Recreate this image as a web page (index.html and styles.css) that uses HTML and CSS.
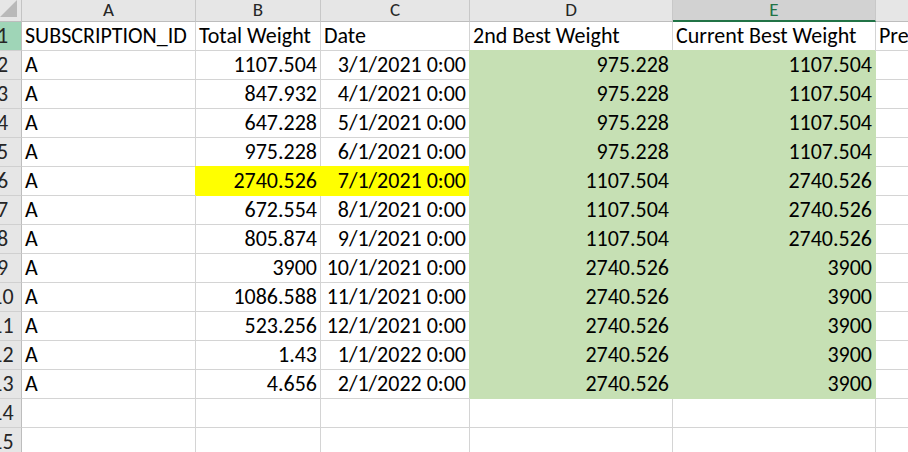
FILE: index.html
```html
<!DOCTYPE html>
<html lang="en">

<head>
    <title>Sheet1</title>
    <link rel="stylesheet" href="styles.css">
</head>

<body>
    <div class="sheet">
        <div class="corner">
            <svg width="17" height="17" viewBox="0 0 17 17"><polygon points="17,0 17,17 0,17" fill="#b9b9b9"/></svg>
        </div>
        <div class="col">A</div>
        <div class="col">B</div>
        <div class="col">C</div>
        <div class="col">D</div>
        <div class="col selcol">E</div>
        <div class="col">F</div>

        <div class="rn selrow">1</div>
        <div class="cell">SUBSCRIPTION_ID</div>
        <div class="cell">Total Weight</div>
        <div class="cell">Date</div>
        <div class="cell">2nd Best Weight</div>
        <div class="cell">Current Best Weight</div>
        <div class="cell">Previous Best Weight</div>

        <div class="rn">2</div>
        <div class="cell">A</div>
        <div class="cell num">1107.504</div>
        <div class="cell num">3/1/2021 0:00</div>
        <div class="cell num green">975.228</div>
        <div class="cell num green">1107.504</div>
        <div class="cell"></div>

        <div class="rn">3</div>
        <div class="cell">A</div>
        <div class="cell num">847.932</div>
        <div class="cell num">4/1/2021 0:00</div>
        <div class="cell num green">975.228</div>
        <div class="cell num green">1107.504</div>
        <div class="cell"></div>

        <div class="rn">4</div>
        <div class="cell">A</div>
        <div class="cell num">647.228</div>
        <div class="cell num">5/1/2021 0:00</div>
        <div class="cell num green">975.228</div>
        <div class="cell num green">1107.504</div>
        <div class="cell"></div>

        <div class="rn">5</div>
        <div class="cell">A</div>
        <div class="cell num">975.228</div>
        <div class="cell num">6/1/2021 0:00</div>
        <div class="cell num green">975.228</div>
        <div class="cell num green">1107.504</div>
        <div class="cell"></div>

        <div class="rn">6</div>
        <div class="cell">A</div>
        <div class="cell num yellow">2740.526</div>
        <div class="cell num yellow">7/1/2021 0:00</div>
        <div class="cell num green">1107.504</div>
        <div class="cell num green">2740.526</div>
        <div class="cell"></div>

        <div class="rn">7</div>
        <div class="cell">A</div>
        <div class="cell num">672.554</div>
        <div class="cell num">8/1/2021 0:00</div>
        <div class="cell num green">1107.504</div>
        <div class="cell num green">2740.526</div>
        <div class="cell"></div>

        <div class="rn">8</div>
        <div class="cell">A</div>
        <div class="cell num">805.874</div>
        <div class="cell num">9/1/2021 0:00</div>
        <div class="cell num green">1107.504</div>
        <div class="cell num green">2740.526</div>
        <div class="cell"></div>

        <div class="rn">9</div>
        <div class="cell">A</div>
        <div class="cell num">3900</div>
        <div class="cell num">10/1/2021 0:00</div>
        <div class="cell num green">2740.526</div>
        <div class="cell num green">3900</div>
        <div class="cell"></div>

        <div class="rn">10</div>
        <div class="cell">A</div>
        <div class="cell num">1086.588</div>
        <div class="cell num">11/1/2021 0:00</div>
        <div class="cell num green">2740.526</div>
        <div class="cell num green">3900</div>
        <div class="cell"></div>

        <div class="rn">11</div>
        <div class="cell">A</div>
        <div class="cell num">523.256</div>
        <div class="cell num">12/1/2021 0:00</div>
        <div class="cell num green">2740.526</div>
        <div class="cell num green">3900</div>
        <div class="cell"></div>

        <div class="rn">12</div>
        <div class="cell">A</div>
        <div class="cell num">1.43</div>
        <div class="cell num">1/1/2022 0:00</div>
        <div class="cell num green">2740.526</div>
        <div class="cell num green">3900</div>
        <div class="cell"></div>

        <div class="rn">13</div>
        <div class="cell">A</div>
        <div class="cell num">4.656</div>
        <div class="cell num">2/1/2022 0:00</div>
        <div class="cell num green">2740.526</div>
        <div class="cell num green">3900</div>
        <div class="cell"></div>

        <div class="rn">14</div>
        <div class="cell"></div>
        <div class="cell"></div>
        <div class="cell"></div>
        <div class="cell"></div>
        <div class="cell"></div>
        <div class="cell"></div>

        <div class="rn">15</div>
        <div class="cell"></div>
        <div class="cell"></div>
        <div class="cell"></div>
        <div class="cell"></div>
        <div class="cell"></div>
        <div class="cell"></div>
    </div>
</body>

</html>
```

FILE: styles.css
```css
html, body {
    margin: 0;
    overflow: hidden;
    background-color: white;
}
body {
    font-family: Carlito, "Liberation Sans", sans-serif;
}
.sheet {
    display: grid;
    grid-template-columns: 38px 174px 125px 149px 203px 203px 160px;
    grid-template-rows: 22px;
    grid-auto-rows: 29px;
    margin-left: -16px;
}
.sheet > div {
    box-sizing: border-box;
    white-space: nowrap;
    overflow: hidden;
}
.corner {
    background-color: #e6e6e6;
    border-right: 1px solid #c4c4c4;
    border-bottom: 1px solid #bdbdbd;
    display: flex;
    justify-content: flex-end;
    align-items: flex-end;
    padding: 0 4px 4px 0;
}
.corner svg {
    display: block;
}
.sheet > .col {
    overflow: visible;
}
.col {
    background-color: #e6e6e6;
    border-right: 1px solid #c8c8c8;
    border-bottom: 1px solid #bdbdbd;
    color: #262626;
    font-size: 19px;
    line-height: 20px;
    text-align: center;
}
.selcol {
    background-color: #d2d2d2;
    color: #217346;
    border-bottom: 2px solid #217346;
}
.rn {
    background-color: #e6e6e6;
    border-right: 1px solid #bdbdbd;
    border-bottom: 1px solid #d0d0d0;
    color: #262626;
    font-size: 22px;
    line-height: 28px;
    text-align: center;
}
.selrow {
    background-color: #9fd5b7;
}
.cell {
    border-right: 1px solid #d4d4d4;
    border-bottom: 1px solid #d4d4d4;
    font-size: 22px;
    line-height: 28px;
    padding: 0 3px;
    color: black;
}
.num {
    text-align: right;
}
.green {
    background-color: #c6e0b4;
    border-color: #c6e0b4;
    box-shadow: -1px -1px 0 0 #c6e0b4;
}
.yellow {
    background-color: yellow;
    border-color: yellow;
    box-shadow: -1px -1px 0 0 yellow;
}
```
